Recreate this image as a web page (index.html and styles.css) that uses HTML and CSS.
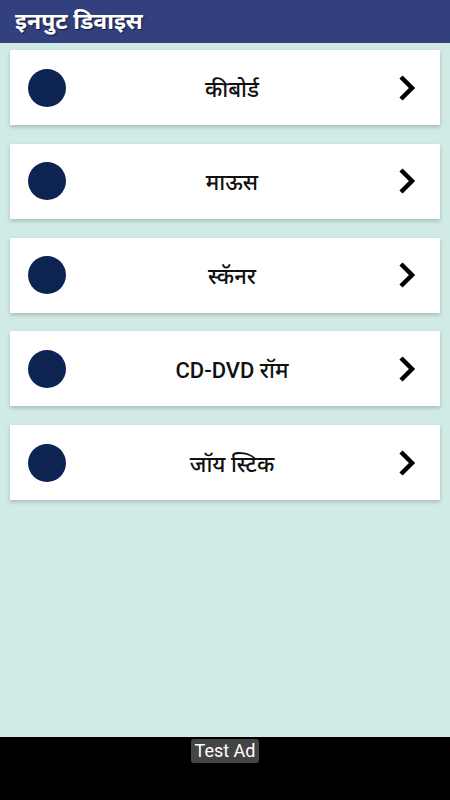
FILE: index.html
```html
<!DOCTYPE html>
<html lang="hi">
<head>
    <meta charset="UTF-8">
    <meta name="viewport" content="width=device-width, initial-scale=1.0">
    <title>इनपुट डिवाइस</title>
    <link rel="stylesheet" href="styles.css">
</head>
<body>
    <div class="toolbar">इनपुट डिवाइस</div>

    <div class="list">
        <div class="item">
            <span class="dot"></span>
            <span class="label">कीबोर्ड</span>
            <svg class="arrow" viewBox="0 0 18 28"><path d="M3 3 L14 14 L3 25" /></svg>
        </div>
        <div class="item">
            <span class="dot"></span>
            <span class="label">माऊस</span>
            <svg class="arrow" viewBox="0 0 18 28"><path d="M3 3 L14 14 L3 25" /></svg>
        </div>
        <div class="item">
            <span class="dot"></span>
            <span class="label">स्कॅनर</span>
            <svg class="arrow" viewBox="0 0 18 28"><path d="M3 3 L14 14 L3 25" /></svg>
        </div>
        <div class="item">
            <span class="dot"></span>
            <span class="label">CD-DVD रॉम</span>
            <svg class="arrow" viewBox="0 0 18 28"><path d="M3 3 L14 14 L3 25" /></svg>
        </div>
        <div class="item">
            <span class="dot"></span>
            <span class="label">जॉय स्टिक</span>
            <svg class="arrow" viewBox="0 0 18 28"><path d="M3 3 L14 14 L3 25" /></svg>
        </div>
    </div>

    <div class="ad">
        <span class="ad-label">Test Ad</span>
    </div>
</body>
</html>
```

FILE: styles.css
```css
body {
    font-family: Roboto, "Noto Sans", sans-serif;
    margin: 0;
    padding: 0;
    display: flex;
    flex-direction: column;
    height: 100vh;
    background-color: #d0eae6;
}

.toolbar {
    background: #33407e;
    color: white;
    height: 43px;
    box-sizing: border-box;
    padding: 8px 15px 0;
    font-size: 23px;
    font-weight: bold;
    line-height: 28px;
    text-shadow: 1px 1px 1px #10163a;
}

.list {
    flex: 1;
    display: flex;
    flex-direction: column;
    gap: 18.75px;
    padding: 7px 10px;
}

.item {
    background: white;
    height: 75px;
    display: flex;
    align-items: center;
    padding: 0 18px;
    box-shadow: 0 2px 4px rgba(0,0,0,0.2);
}

.dot {
    width: 38px;
    height: 38px;
    border-radius: 50%;
    background: #0d2352;
    flex-shrink: 0;
}

.label {
    flex: 1;
    text-align: center;
    font-size: 22px;
    font-weight: 500;
    color: #111;
}

.arrow {
    width: 18px;
    height: 28px;
    margin-right: 6px;
    flex-shrink: 0;
}

.arrow path {
    fill: none;
    stroke: #000;
    stroke-width: 4.5;
}

.ad {
    background: #000;
    height: 63px;
    display: flex;
    justify-content: center;
    align-items: flex-start;
    padding-top: 2px;
    box-sizing: border-box;
}

.ad-label {
    background: #444;
    color: white;
    font-size: 18px;
    line-height: 24px;
    padding: 0 4px;
    border-radius: 3px;
}
```
